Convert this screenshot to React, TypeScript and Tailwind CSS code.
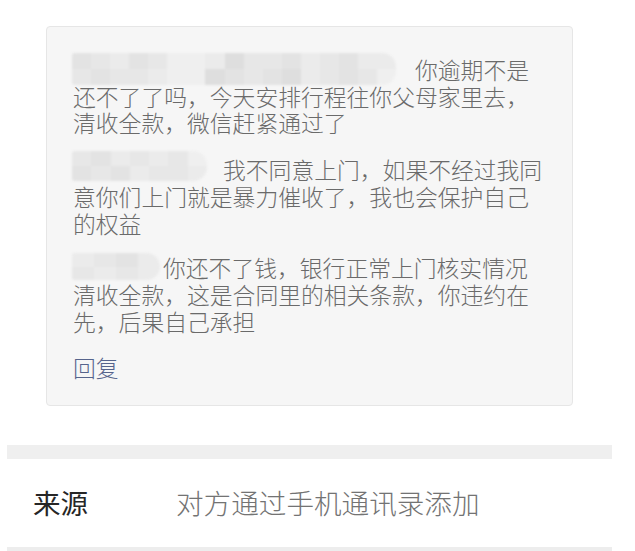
import React from 'react';

// shades used for the pixelated name blocks
const tiles: Record<string, string> = {
  a: 'bg-[#dedede]',
  b: 'bg-[#e3e3e3]',
  c: 'bg-[#e7e7e7]',
  d: 'bg-[#ebebeb]',
  e: 'bg-[#efefef]',
  f: 'bg-[#d8d8d8]',
};

const Mosaic = ({
  top,
  bottom,
  className,
}: {
  top: string;
  bottom: string;
  className: string;
}) => (
  <span className={`absolute flex flex-col overflow-hidden rounded-r-[14px] rounded-l-[3px] blur-[1.2px] ${className}`}>
    <span className="flex flex-1">
      {top.split('').map((k, i) => (
        <span key={i} className={`flex-1 ${tiles[k]}`} />
      ))}
    </span>
    <span className="flex flex-1">
      {bottom.split('').map((k, i) => (
        <span key={i} className={`flex-1 ${tiles[k]}`} />
      ))}
    </span>
  </span>
);

const Message = ({
  slot,
  mosaic,
  text,
  className = '',
}: {
  slot: string;
  mosaic: React.ReactNode;
  text: string;
  className?: string;
}) => (
  <p className={className}>
    <span className={`relative inline-block h-[26px] align-top ${slot}`}>{mosaic}</span>
    {text}
  </p>
);

export default function App() {
  return (
    <div className="w-[635px] h-[551px] overflow-hidden bg-white font-['Noto_Sans_CJK_SC','Noto_Sans',sans-serif]">
      <div className="pt-[26px] pl-[46px]">
        <div className="w-[527px] h-[380px] rounded-[4px] border border-[#e6e6e6] bg-[#f6f6f6] pt-[30px] pl-[26px]">
          <div className="w-[475px] text-[22.8px] leading-[26.7px] font-light text-[#6a6a6a]">
            <Message
              slot="w-[342px]"
              mosaic={
                <Mosaic
                  className="-left-px -top-[4px] w-[324px] h-[32px]"
                  top="bcdbceedaccbdcbdd"
                  bottom="cbccdeeabcbadcbce"
                />
              }
              text="你逾期不是还不了了吗，今天安排行程往你父母家里去，清收全款，微信赶紧通过了"
            />
            <Message
              className="mt-[20px]"
              slot="w-[150px]"
              mosaic={
                <Mosaic
                  className="-left-px -top-[6px] w-[135px] h-[30px]"
                  top="cbdcdce"
                  bottom="bcbdccd"
                />
              }
              text="我不同意上门，如果不经过我同意你们上门就是暴力催收了，我也会保护自己的权益"
            />
            <Message
              className="mt-[18px]"
              slot="w-[90px]"
              mosaic={
                <Mosaic
                  className="-left-px -top-[2px] w-[88px] h-[27px]"
                  top="dcbd"
                  bottom="cdcd"
                />
              }
              text="你还不了钱，银行正常上门核实情况清收全款，这是合同里的相关条款，你违约在先，后果自己承担"
            />
            <p className="mt-[20px] text-[#56648c]">回复</p>
          </div>
        </div>
      </div>

      <div className="ml-[7px] mt-[39px] w-[605px]">
        <div className="h-[14px] bg-[#efefef]" />
        <div className="flex h-[88px] items-center pl-[26px] text-[27.6px]">
          <span className="w-[143px] text-[#262626]">来源</span>
          <span className="font-light text-[#737373]">对方通过手机通讯录添加</span>
        </div>
        <div className="h-[4px] bg-[#ededed]" />
      </div>
    </div>
  );
}
